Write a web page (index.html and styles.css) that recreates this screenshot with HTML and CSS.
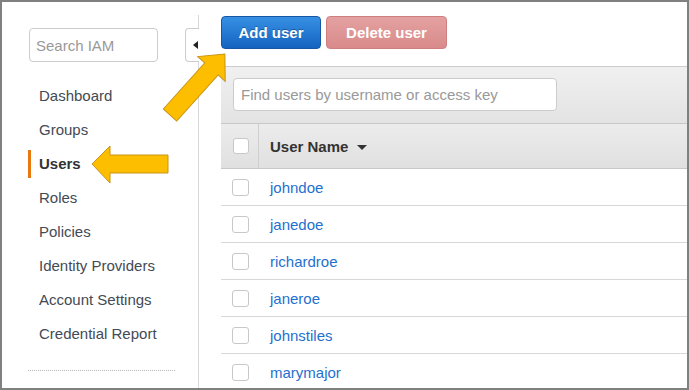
FILE: index.html
```html
<!DOCTYPE html>
<html lang="en">
<head>
    <meta charset="UTF-8">
    <title>IAM - Users</title>
    <link rel="stylesheet" href="styles.css">
</head>
<body>

<div class="frame">
    <div class="sidebar">
        <input class="search-iam" type="text" placeholder="Search IAM">
        <div class="collapse-tab"><span class="tri-left"></span></div>

        <ul class="nav">
            <li><a href="#">Dashboard</a></li>
            <li><a href="#">Groups</a></li>
            <li><a href="#" class="active">Users</a></li>
            <li><a href="#">Roles</a></li>
            <li><a href="#">Policies</a></li>
            <li><a href="#">Identity Providers</a></li>
            <li><a href="#">Account Settings</a></li>
            <li><a href="#">Credential Report</a></li>
        </ul>
        <div class="nav-sep"></div>
    </div>

    <div class="main">
        <div class="actions">
            <button class="btn btn-add">Add user</button>
            <button class="btn btn-delete">Delete user</button>
        </div>

        <div class="panel">
            <div class="filter-bar">
                <input class="filter-input" type="text" placeholder="Find users by username or access key">
            </div>
            <div class="head-row">
                <div class="head-check"><span class="checkbox checkbox-head"></span></div>
                <div class="head-name">User Name <span class="sort-tri"></span></div>
            </div>
            <div class="row"><div class="cell-check"><span class="checkbox"></span></div><a href="#" class="cell-name">johndoe</a></div>
            <div class="row"><div class="cell-check"><span class="checkbox"></span></div><a href="#" class="cell-name">janedoe</a></div>
            <div class="row"><div class="cell-check"><span class="checkbox"></span></div><a href="#" class="cell-name">richardroe</a></div>
            <div class="row"><div class="cell-check"><span class="checkbox"></span></div><a href="#" class="cell-name">janeroe</a></div>
            <div class="row"><div class="cell-check"><span class="checkbox"></span></div><a href="#" class="cell-name">johnstiles</a></div>
            <div class="row"><div class="cell-check"><span class="checkbox"></span></div><a href="#" class="cell-name">marymajor</a></div>
        </div>
    </div>

    <!-- callout arrows drawn over the screenshot -->
    <svg class="callouts" width="689" height="390" viewBox="0 0 689 390">
        <g transform="translate(170 115) rotate(-48)">
            <polygon points="0,-9 62,-9 62,-18.5 82,0 62,18.5 62,9 0,9"/>
        </g>
        <polygon points="168,155 110,155 110,146 92,164 110,183 110,173 168,173"/>
    </svg>
</div>

</body>
</html>
```

FILE: styles.css
```css
body {
    margin: 0;
    font-family: "Liberation Sans", Arial, sans-serif;
    background: #fff;
}

.frame {
    position: relative;
    width: 689px;
    height: 390px;
    box-sizing: border-box;
    border: 2px solid #808080;
    display: flex;
    overflow: hidden;
    background: #fff;
}

/* sidebar */
.sidebar {
    position: relative;
    width: 197px;
    flex-shrink: 0;
    box-sizing: border-box;
    margin-top: 13px;
    padding: 13px 0 0 26px;
    border-right: 1px solid #d8d8d8;
}

.search-iam {
    display: block;
    box-sizing: border-box;
    width: 129px;
    height: 34px;
    margin-left: 1px;
    padding: 0 6px;
    border: 1px solid #ccc;
    border-radius: 4px;
    font-family: inherit;
    font-size: 15px;
    color: #333;
    outline: none;
}

.search-iam::placeholder {
    color: #999;
}

.collapse-tab {
    position: absolute;
    left: 183px;
    top: 13px;
    width: 14px;
    height: 34px;
    box-sizing: border-box;
    border: 1px solid #ccc;
    border-right: none;
    border-radius: 4px 0 0 4px;
    background: #fff;
    display: flex;
    align-items: center;
    padding-left: 7px;
}

.tri-left {
    width: 0;
    height: 0;
    border-top: 4px solid transparent;
    border-bottom: 4px solid transparent;
    border-right: 5px solid #222;
}

.nav {
    list-style: none;
    margin: 17px 0 0 0;
    padding: 0;
}

.nav li {
    padding: 3px 0;
}

.nav a {
    display: block;
    height: 28px;
    line-height: 28px;
    padding-left: 8px;
    border-left: 3px solid transparent;
    color: #434a54;
    font-size: 15px;
    text-decoration: none;
}

.nav a.active {
    border-left-color: #e8790f;
    font-weight: bold;
    color: #333;
}

.nav-sep {
    width: 147px;
    margin-top: 19px;
    border-top: 1px dotted #bbb;
}

/* main */
.main {
    flex: 1;
    min-width: 0;
    padding: 14px 0 0 22px;
}

.actions {
    display: flex;
    gap: 5px;
}

.btn {
    height: 33px;
    box-sizing: border-box;
    border-radius: 4px;
    font-family: inherit;
    font-size: 15px;
    font-weight: bold;
    color: #fff;
    padding: 0 10px;
    cursor: pointer;
}

.btn-add {
    width: 100px;
    background: linear-gradient(#3790e4, #1463c0);
    border: 1px solid #1657a5;
    text-shadow: 0 -1px 0 rgba(0,0,0,0.3);
}

.btn-delete {
    width: 121px;
    background: linear-gradient(#e4a1a1, #d98a8a);
    border: 1px solid #d07f80;
}

.panel {
    margin-top: 17px;
    margin-right: -4px;
}

.filter-bar {
    border-top: 1px solid #ccc;
    background: linear-gradient(#f0f0f0, #e3e3e3);
    padding: 11px 12px 12px 12px;
}

.filter-input {
    display: block;
    box-sizing: border-box;
    width: 324px;
    height: 33px;
    border: 1px solid #ccc;
    border-radius: 4px;
    padding: 0 7px;
    font-family: inherit;
    font-size: 15px;
    outline: none;
}

.filter-input::placeholder {
    color: #999;
}

.head-row {
    display: flex;
    height: 44px;
    border-top: 1px solid #c8c8c8;
    border-bottom: 1px solid #c8c8c8;
    background: linear-gradient(#ececec, #e0e0e0);
}

.head-check {
    width: 37px;
    border-right: 1px solid #cfcfcf;
    display: flex;
    align-items: center;
}

.head-name {
    padding-left: 11px;
    display: flex;
    align-items: center;
    font-size: 15px;
    font-weight: bold;
    color: #333;
}

.sort-tri {
    margin-left: 9px;
    margin-top: 2px;
    width: 0;
    height: 0;
    border-left: 5px solid transparent;
    border-right: 5px solid transparent;
    border-top: 5px solid #333;
}

.checkbox {
    display: block;
    box-sizing: border-box;
    width: 17px;
    height: 17px;
    margin-left: 11px;
    border: 1px solid #c8c8c8;
    border-radius: 3px;
    background: #fff;
}

.checkbox-head {
    width: 16px;
    height: 16px;
    margin-left: 12px;
}

.row {
    display: flex;
    align-items: center;
    height: 36px;
    border-bottom: 1px solid #d8d8d8;
}

.cell-check {
    width: 37px;
}

.cell-name {
    padding-left: 12px;
    font-size: 15px;
    color: #1f70cf;
    text-decoration: none;
}

.callouts {
    position: absolute;
    left: -2px;
    top: -2px;
    pointer-events: none;
}

.callouts polygon {
    fill: #fdbe00;
    stroke: #c89417;
    stroke-width: 1;
    stroke-linejoin: miter;
}
```
